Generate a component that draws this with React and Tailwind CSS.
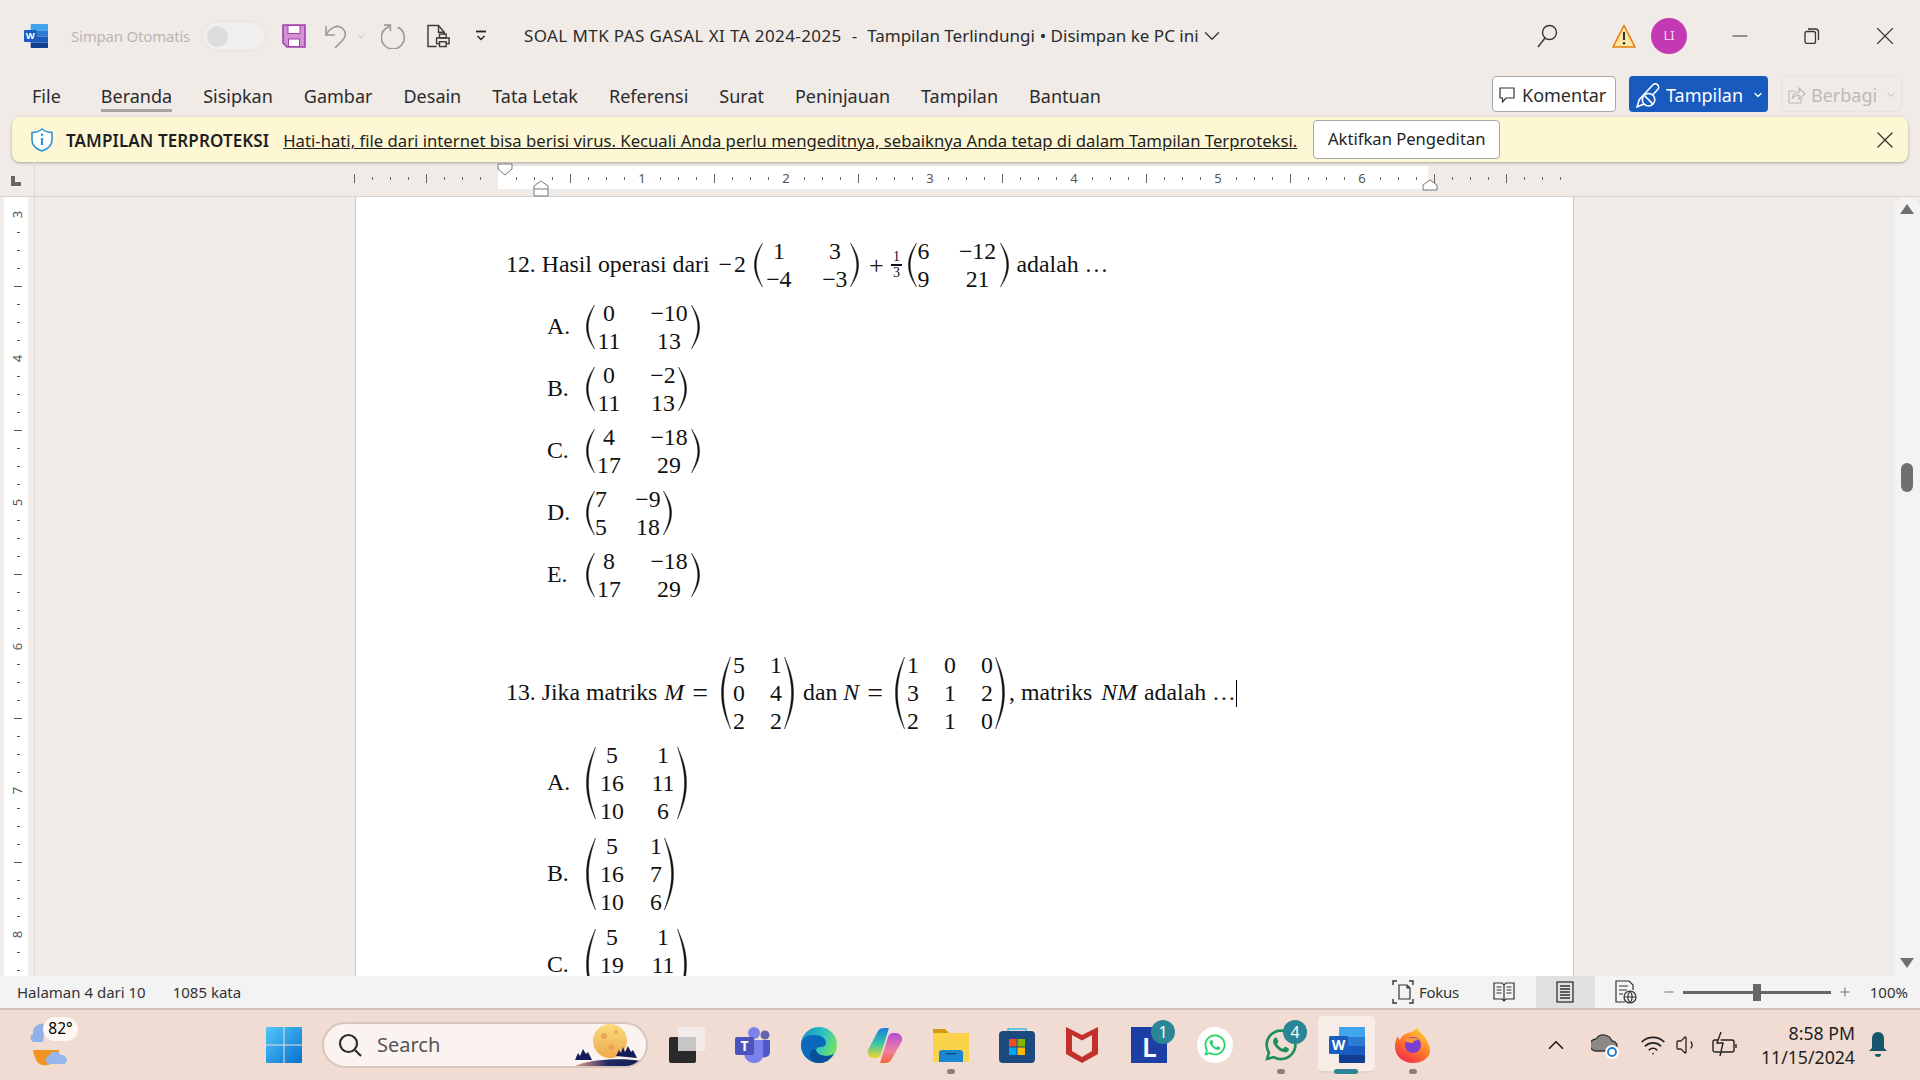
import { FaWhatsapp } from 'react-icons/fa';
import { ChevronDown, ChevronUp, Minus, Plus, X, Wifi, Volume1 } from 'lucide-react';

const tabs = ['Beranda', 'Sisipkan', 'Gambar', 'Desain', 'Tata Letak', 'Referensi', 'Surat', 'Peninjauan', 'Tampilan', 'Bantuan'];

const hTicks = Array.from({ length: 68 }, (_, i) => i - 8);
const vTicks = Array.from({ length: 43 }, (_, i) => i);

function WordIcon({ className }) {
  return (
    <svg viewBox="0 0 36 36" className={className}>
      <path d="M10 1a1 1 0 0 1 1-1h24a1 1 0 0 1 1 1v9H10z" fill="#41a5ee" />
      <rect x="10" y="10" width="26" height="9" fill="#2b7cd3" />
      <rect x="10" y="19" width="26" height="9" fill="#185abd" />
      <path d="M10 28h26v7a1 1 0 0 1-1 1H11a1 1 0 0 1-1-1z" fill="#103f91" />
      <rect x="0" y="9" width="19" height="18" rx="1.5" fill="#1a5cc0" />
      <text x="9.5" y="23" textAnchor="middle" fontSize="14" fontWeight="700" fill="#fff" fontFamily="Noto Sans">W</text>
    </svg>
  );
}

function Paren({ right, className }) {
  return (
    <svg viewBox="0 0 10 60" preserveAspectRatio="none" className={className}>
      <path
        d={right
          ? 'M0.5 0C7 12 9.5 20 9.5 30S7 48 0.5 60C5 48 7.5 40 7.5 30S5 12 0.5 0z'
          : 'M9.5 0C3 12 0.5 20 0.5 30S3 48 9.5 60C5 48 2.5 40 2.5 30S5 12 9.5 0z'}
        fill="#111"
        stroke="#111"
        strokeWidth="0.4"
        vectorEffect="non-scaling-stroke"
      />
    </svg>
  );
}

function Matrix({ cells, gridClass, parenClass }) {
  return (
    <div className="flex items-center">
      <Paren className={parenClass} />
      <div className={`grid text-center leading-[28px] ${gridClass}`}>
        {cells.map((c, i) => (
          <span key={i} className="whitespace-nowrap">{c}</span>
        ))}
      </div>
      <Paren right className={parenClass} />
    </div>
  );
}

function Option2({ label, cells, gridClass }) {
  return (
    <div className="flex items-center h-[62px]">
      <span className="w-[39px]">{label}</span>
      <Matrix cells={cells} gridClass={gridClass} parenClass="w-[9px] h-[44px]" />
    </div>
  );
}

function Option3({ label, cells, gridClass }) {
  return (
    <div className="flex items-center h-[91px] shrink-0">
      <span className="w-[39px]">{label}</span>
      <Matrix cells={cells} gridClass={gridClass} parenClass="w-[10px] h-[72px]" />
    </div>
  );
}

function TitleBar() {
  return (
    <div className="h-[72px] flex items-center pl-[24px] pr-[20px]">
      <WordIcon className="w-[24px] h-[24px]" />
      <span className="ml-[23px] w-[121px] text-[15px] text-[#b9b6b3] whitespace-nowrap tracking-[-0.2px]">Simpan Otomatis</span>
      <div className="ml-[10px] w-[64px] h-[30px] rounded-full bg-[#f1efed] border border-[#e6e3e0] flex items-center pl-[4px]">
        <div className="w-[21px] h-[21px] rounded-full bg-[#dfdddb]" />
      </div>
      <svg viewBox="0 0 24 24" className="ml-[16px] w-[24px] h-[24px]">
        <path d="M1 1h22v22H5l-4-4z" fill="#d492d6" stroke="#a43fae" strokeWidth="1.6" />
        <rect x="6" y="1.5" width="12" height="8" fill="#fff" stroke="#a43fae" strokeWidth="1" />
        <rect x="6.5" y="15" width="11" height="7.5" fill="#fff" stroke="#a43fae" strokeWidth="1" />
      </svg>
      <svg viewBox="0 0 24 24" className="ml-[18px] w-[24px] h-[24px]" fill="none" stroke="#9b9997" strokeWidth="1.6">
        <path d="M2 2v9h9" />
        <path d="M2 11C6 4 13 0 18 4c5 4 4 9 0 13l-7 7" />
      </svg>
      <ChevronDown className="ml-[7px] w-[11px] h-[11px] text-[#b5b3b1]" strokeWidth={2} />
      <svg viewBox="0 0 24 24" className="ml-[15px] w-[25px] h-[25px]" fill="none" stroke="#9b9997" strokeWidth="1.6">
        <path d="M8 2.5A11 11 0 1 0 16 3" />
        <path d="M3 1h6v6" />
      </svg>
      <svg viewBox="0 0 24 24" className="ml-[21px] w-[23px] h-[24px]" fill="none" stroke="#3b3b3b" strokeWidth="1.5">
        <path d="M10 23H1V1h11l6 7v3" />
        <path d="M12 1v7h6" />
        <rect x="10" y="14" width="13" height="6" fill="#f1ebe7" />
        <rect x="13" y="10" width="7" height="4" />
        <rect x="13" y="18" width="7" height="5" fill="#f1ebe7" />
      </svg>
      <svg viewBox="0 0 12 12" className="ml-[25px] w-[12px] h-[12px]" fill="none" stroke="#222" strokeWidth="1.4">
        <path d="M1 1.5h10" strokeWidth="1.8" />
        <path d="M2.5 6L6 9.5 9.5 6" />
      </svg>
      <div className="ml-[37px] text-[17px] text-[#2b2b2b] whitespace-nowrap flex items-center">
        <span className="tracking-[0.4px]">SOAL MTK PAS GASAL XI TA 2024-2025</span>
        <span className="mx-[10px]">-</span>
        <span>Tampilan Terlindungi</span>
        <span className="ml-[5px]">• Disimpan ke PC ini</span>
      </div>
      <ChevronDown className="w-[26px] h-[26px] text-[#333]" strokeWidth={1.1} />
      <div className="ml-auto flex items-center">
        <svg viewBox="0 0 22 24" className="w-[22px] h-[24px]" fill="none" stroke="#333" strokeWidth="1.4">
          <circle cx="13.5" cy="8.5" r="7" />
          <path d="M9 14L2 23" />
        </svg>
        <svg viewBox="0 0 24 24" className="ml-[54px] w-[24px] h-[24px]">
          <path d="M12 1.5L23 23H1z" fill="#fbe6a6" stroke="#e87d0d" strokeWidth="1.6" strokeLinejoin="round" />
          <path d="M12 8v8" stroke="#333" strokeWidth="2" />
          <circle cx="12" cy="19.2" r="1.2" fill="#333" />
        </svg>
        <div className="ml-[15px] w-[36px] h-[36px] rounded-full bg-[#c239b3] text-[#f6d8f2] text-[13px] flex items-center justify-center">LI</div>
        <Minus className="ml-[41px] w-[24px] h-[24px] text-[#333]" strokeWidth={1} />
        <svg viewBox="0 0 16 16" className="ml-[52px] w-[16px] h-[16px]" fill="none" stroke="#333" strokeWidth="1.3">
          <rect x="1" y="3.5" width="10.5" height="12" rx="2" />
          <path d="M4 1h7.5a3 3 0 0 1 3 3v8" />
        </svg>
        <X className="ml-[50px] w-[30px] h-[30px] text-[#333]" strokeWidth={0.9} />
      </div>
    </div>
  );
}

function TabRow() {
  return (
    <div className="h-[45px] flex items-start pl-[32px] pr-[18px] pt-[4px] text-[18px] text-[#2b2b2b]">
      <span className="leading-[40px]">File</span>
      <div className="ml-[40px] flex gap-[31px]">
        {tabs.map(t => (
          <span key={t} className={`leading-[40px] h-[36px] ${t === 'Beranda' ? 'border-b-[3px] border-[#a8a6a4]' : ''}`}>{t}</span>
        ))}
      </div>
      <div className="ml-auto flex items-center gap-[13px] text-[18px]">
        <div className="w-[124px] h-[36px] bg-white border border-[#a9a7a5] rounded-[4px] flex items-center pl-[6px] pt-[2px] gap-[7px]">
          <svg viewBox="0 0 16 16" className="w-[16px] h-[16px]" fill="none" stroke="#333" strokeWidth="1.2">
            <path d="M1 1h14v10H7l-3.5 4V11H1z" />
          </svg>
          Komentar
        </div>
        <div className="w-[139px] h-[36px] bg-[#185abd] text-white rounded-[4px] flex items-center pl-[6px] pt-[2px] gap-[6px]">
          <svg viewBox="0 0 24 24" className="w-[25px] h-[25px]" fill="none" stroke="#fff" strokeWidth="1.5">
            <path d="M2 23l2-7L17 2a3 3 0 0 1 5 4L9 20z" />
            <circle cx="13" cy="16" r="6" fill="#185abd" />
            <path d="M9 12l8 8" />
          </svg>
          Tampilan
          <ChevronDown className="ml-[3px] w-[12px] h-[12px]" strokeWidth={2.5} />
        </div>
        <div className="w-[121px] h-[36px] bg-[#efebe8] border border-[#e6e2df] text-[#bcbab8] rounded-[4px] flex items-center pl-[6px] pt-[2px] gap-[5px]">
          <svg viewBox="0 0 18 18" className="w-[18px] h-[18px]" fill="none" stroke="#bcbab8" strokeWidth="1.2">
            <path d="M7 5H1v12h12v-5" />
            <path d="M4 13C5 8 8 6 11 6V2l6 6-6 5V9C8 9 6 10 4 13z" />
          </svg>
          Berbagi
          <ChevronDown className="ml-[3px] w-[12px] h-[12px]" strokeWidth={2} />
        </div>
      </div>
    </div>
  );
}

function Banner() {
  return (
    <div className="mx-[12px] h-[45px] rounded-[8px] bg-[#fdf7d3] shadow-[0_1px_3px_rgba(0,0,0,0.3)] flex items-center pl-[19px] pr-[9px] text-[#1f1f1f]">
      <svg viewBox="0 0 22 24" className="w-[22px] h-[24px]" fill="none" stroke="#2f93d4" strokeWidth="1.6">
        <path d="M11 1c3 2.5 6 3.5 10 3.5V12c0 5-4 9-10 11C5 21 1 17 1 12V4.5C5 4.5 8 3.5 11 1z" fill="#fff" />
        <path d="M11 10v7" strokeWidth="2.2" />
        <circle cx="11" cy="6.8" r="1.2" fill="#2f93d4" stroke="none" />
      </svg>
      <span className="ml-[13px] pt-[2px] text-[17px] font-semibold whitespace-nowrap tracking-[0.1px]">TAMPILAN TERPROTEKSI</span>
      <span className="ml-[14px] pt-[2px] text-[16.7px] underline whitespace-nowrap">Hati-hati, file dari internet bisa berisi virus. Kecuali Anda perlu mengeditnya, sebaiknya Anda tetap di dalam Tampilan Terproteksi.</span>
      <div className="ml-[16px] w-[187px] h-[39px] bg-white border border-[#a9a7a5] rounded-[4px] flex items-center justify-center text-[16.6px] whitespace-nowrap">Aktifkan Pengeditan</div>
      <X className="ml-auto w-[28px] h-[28px] text-[#333]" strokeWidth={1.1} />
    </div>
  );
}

function Ruler() {
  return (
    <div className="relative h-[35px] border-b border-[#d6d4d2]">
      <div className="mt-[4px] ml-[498px] w-[930px] h-[23px] bg-white" />
      <div className="absolute left-[34px] top-0 bottom-0 w-px bg-[#dcdad8]" />
      <div className="absolute left-[11px] top-[14px] w-[10px] h-[10px] border-l-[4px] border-b-[4px] border-[#666]" />
      <div className="absolute left-0 top-[5px] h-[23px] pl-[345px] flex items-center">
        {hTicks.map(n => (
          <div key={n} className="w-[18px] flex justify-center items-center">
            {n % 8 === 0 && n >= 8 && n <= 48 ? (
              <span className="text-[13px] leading-none text-[#555]">{n / 8}</span>
            ) : n === 0 ? null : n % 4 === 0 ? (
              <div className="w-px h-[9px] bg-[#666]" />
            ) : (
              <div className="w-px h-[3px] bg-[#666]" />
            )}
          </div>
        ))}
      </div>
      <svg viewBox="0 0 16 13" className="absolute left-[497px] top-[1px] w-[16px] h-[13px]">
        <path d="M1 1h14v5l-7 6-7-6z" fill="#fff" stroke="#777" />
      </svg>
      <svg viewBox="0 0 16 17" className="absolute left-[533px] top-[18px] w-[16px] h-[17px]">
        <path d="M1 16V6l7-5 7 5v10zM1 9h14" fill="#fff" stroke="#777" />
      </svg>
      <svg viewBox="0 0 16 12" className="absolute left-[1422px] top-[17px] w-[16px] h-[12px]">
        <path d="M1 11V6l7-5 7 5v5z" fill="#fff" stroke="#777" />
      </svg>
    </div>
  );
}

function VRuler() {
  return (
    <div className="w-[35px] h-full border-r border-[#dcdad8] pl-[4px] shrink-0 overflow-hidden">
      <div className="w-[24px] h-full bg-white pt-[8px] pl-[4px]">
        {vTicks.map(i => (
          <div key={i} className="h-[18px] flex items-center justify-center">
            {i % 8 === 0 ? (
              <span className="text-[13px] leading-none text-[#555] -rotate-90">{i / 8 + 3}</span>
            ) : i % 4 === 0 ? (
              <div className="w-[8px] h-px bg-[#555]" />
            ) : (
              <div className="w-[3px] h-px bg-[#555]" />
            )}
          </div>
        ))}
      </div>
    </div>
  );
}

function Page() {
  return (
    <div className="w-[1219px] h-full shrink-0 bg-white border-x border-[#c9c7c5] pl-[150px] pt-[37px] overflow-hidden font-['Liberation_Serif',serif] text-[23.8px] text-[#111]">
      <div className="flex items-center h-[62px] whitespace-nowrap">
        <span>12. Hasil operasi dari</span>
        <span className="ml-[9px] tracking-[2px]">−2</span>
        <div className="ml-[6px]">
          <Matrix cells={['1', '3', '−4', '−3']} gridClass="grid-cols-[32px_30px] gap-x-[25px]" parenClass="w-[9px] h-[44px]" />
        </div>
        <span className="ml-[10px] mr-[7px] text-[26px]">+</span>
        <div className="flex flex-col items-center w-[12px] text-[14px] leading-[14px]">
          <span>1</span>
          <div className="w-[11px] h-[2px] bg-[#111]" />
          <span>3</span>
        </div>
        <div className="ml-[5px]">
          <Matrix cells={['6', '−12', '9', '21']} gridClass="grid-cols-[14px_44px] gap-x-[25px]" parenClass="w-[9px] h-[44px]" />
        </div>
        <span className="ml-[8px]">adalah …</span>
      </div>
      <div className="pl-[41px]">
        <Option2 label="A." cells={['0', '−10', '11', '13']} gridClass="grid-cols-[28px_44px] gap-x-[24px]" />
        <Option2 label="B." cells={['0', '−2', '11', '13']} gridClass="grid-cols-[28px_30px] gap-x-[25px]" />
        <Option2 label="C." cells={['4', '−18', '17', '29']} gridClass="grid-cols-[28px_44px] gap-x-[24px]" />
        <Option2 label="D." cells={['7', '−9', '5', '18']} gridClass="grid-cols-[12px_30px] gap-x-[26px]" />
        <Option2 label="E." cells={['8', '−18', '17', '29']} gridClass="grid-cols-[28px_44px] gap-x-[24px]" />
      </div>
      <div className="mt-[45px] flex items-center h-[84px] whitespace-nowrap">
        <span>13. Jika matriks</span>
        <i className="ml-[7px]">M</i>
        <span className="ml-[8px] text-[28px] leading-none">=</span>
        <div className="ml-[13px]">
          <Matrix cells={['5', '1', '0', '4', '2', '2']} gridClass="grid-cols-[16px_16px] gap-x-[21px]" parenClass="w-[10px] h-[72px]" />
        </div>
        <span className="ml-[9px]">dan</span>
        <i className="ml-[6px]">N</i>
        <span className="ml-[8px] text-[28px] leading-none">=</span>
        <div className="ml-[12px]">
          <Matrix cells={['1', '0', '0', '3', '1', '2', '2', '1', '0']} gridClass="grid-cols-[16px_16px_16px] gap-x-[21px]" parenClass="w-[10px] h-[72px]" />
        </div>
        <span className="ml-[4px]">, matriks</span>
        <i className="ml-[9px]">NM</i>
        <span className="ml-[7px]">adalah …</span>
        <div className="w-px h-[27px] bg-black" />
      </div>
      <div className="pl-[41px] mt-[2px]">
        <Option3 label="A." cells={['5', '1', '16', '11', '10', '6']} gridClass="grid-cols-[32px_28px] gap-x-[21px]" />
        <Option3 label="B." cells={['5', '1', '16', '7', '10', '6']} gridClass="grid-cols-[32px_16px] gap-x-[20px]" />
        <Option3 label="C." cells={['5', '1', '19', '11', '10', '6']} gridClass="grid-cols-[32px_28px] gap-x-[21px]" />
      </div>
    </div>
  );
}

function ScrollBar() {
  return (
    <div className="w-[26px] h-full shrink-0 bg-[#f3f3f3] rounded-t-[12px] flex flex-col items-center pt-[7px] pb-[8px]">
      <svg viewBox="0 0 14 10" className="w-[14px] h-[10px]"><path d="M7 0l7 10H0z" fill="#707070" /></svg>
      <div className="mt-[249px] w-[12px] h-[29px] rounded-full bg-[#707070]" />
      <svg viewBox="0 0 14 10" className="mt-auto w-[14px] h-[10px]"><path d="M7 10l7-10H0z" fill="#707070" /></svg>
    </div>
  );
}

function StatusBar() {
  return (
    <div className="h-[32px] bg-[#f3f3f3] flex items-center pl-[17px] pr-[12px] text-[15px] text-[#333]">
      <span>Halaman 4 dari 10</span>
      <span className="ml-[27px]">1085 kata</span>
      <div className="ml-auto flex items-center h-full">
        <svg viewBox="0 0 22 24" className="w-[22px] h-[24px]" fill="none" stroke="#333" strokeWidth="1.2">
          <path d="M7 5h8l3 3v11H7zM15 5v3h3" />
          <path d="M1 5V1h4M17 1h4v4M1 19v4h4M21 19v4h-4" strokeWidth="1.4" />
        </svg>
        <span className="ml-[5px] tracking-[-0.3px]">Fokus</span>
        <svg viewBox="0 0 22 20" className="ml-[34px] w-[22px] h-[20px]" fill="none" stroke="#333" strokeWidth="1.2">
          <path d="M1 1h8l2 2 2-2h8v16h-8l-2 2-2-2H1zM11 3v15M3.5 5h5M3.5 8h5M3.5 11h5M13.5 5h5M13.5 8h5M13.5 11h5" />
        </svg>
        <div className="ml-[21px] w-[59px] h-full bg-[#e0e0e0] flex items-center justify-center">
          <svg viewBox="0 0 18 22" className="w-[18px] h-[22px]" fill="none" stroke="#333" strokeWidth="1.3">
            <rect x="1" y="1" width="16" height="20" />
            <path d="M4 5h10M4 8h10M4 11h10M4 14h10M4 17h10" strokeWidth="1.6" />
          </svg>
        </div>
        <svg viewBox="0 0 22 24" className="ml-[20px] w-[22px] h-[24px]" fill="none" stroke="#333" strokeWidth="1.2">
          <path d="M10 22H1V1h13l4 4v5M4 6h9M4 10h8M4 14h4" />
          <circle cx="15" cy="17" r="6" fill="#f3f3f3" />
          <path d="M9 17h12M15 11c-3 4-3 8 0 12M15 11c3 4 3 8 0 12" />
        </svg>
        <Minus className="ml-[25px] w-[14px] h-[14px] text-[#555]" strokeWidth={1.4} />
        <div className="ml-[7px] relative w-[148px] h-[3px] bg-[#666]">
          <div className="absolute left-[70px] -top-[7px] w-[8px] h-[17px] bg-[#666]" />
        </div>
        <Plus className="ml-[7px] w-[14px] h-[14px] text-[#555]" strokeWidth={1.4} />
        <span className="ml-[18px]">100%</span>
      </div>
    </div>
  );
}

function Weather() {
  return (
    <div className="relative w-[46px] h-[46px] ml-[28px]">
      <svg viewBox="0 0 46 46" className="w-[46px] h-[46px]">
        <path d="M5 8a10 10 0 0 1 12-6l-2 18h-8c-5 0-6-7-2-8z" fill="#8fb2ea" />
        <path d="M5 28h26c0 10-8 17-17 15C9 42 6 35 5 28z" fill="#f29423" />
        <path d="M22 42c-5 0-6-7-1-8 1-5 9-6 12-1 6-1 9 9 1 9z" fill="#96b7ee" />
      </svg>
      <div className="absolute left-[15px] -top-[5px] w-[35px] h-[24px] rounded-full bg-[#fdf8f4] text-[15.5px] text-black flex items-center justify-center">82°</div>
    </div>
  );
}

function SearchBox() {
  return (
    <div className="ml-[20px] w-[326px] h-[46px] rounded-full bg-[#faf3ef] border-2 border-[#d9c5bc] flex items-center pl-[14px] relative overflow-hidden">
      <svg viewBox="0 0 24 24" className="w-[24px] h-[24px]" fill="none" stroke="#2b2b2b" strokeWidth="2.2">
        <circle cx="10.5" cy="10.5" r="8.5" />
        <path d="M17 17l6 6" />
      </svg>
      <span className="ml-[15px] text-[20px] text-[#555]">Search</span>
      <svg viewBox="0 0 68 44" className="absolute right-[4px] top-0 w-[68px] h-[44px]">
        <defs>
          <linearGradient id="moonFill" x1="0" y1="0" x2="0" y2="1">
            <stop offset="0" stopColor="#fadb80" />
            <stop offset="1" stopColor="#f0a94b" />
          </linearGradient>
          <linearGradient id="hill" x1="0" y1="0" x2="1" y2="0">
            <stop offset="0" stopColor="#eaa28f" />
            <stop offset="0.5" stopColor="#1f2a63" />
            <stop offset="1" stopColor="#131b55" />
          </linearGradient>
        </defs>
        <circle cx="36" cy="17" r="17" fill="url(#moonFill)" />
        <circle cx="30" cy="12" r="3" fill="#e8a94e" />
        <circle cx="42" cy="8" r="2" fill="#e8a94e" />
        <circle cx="37" cy="23" r="2.5" fill="#ed9c5a" />
        <path d="M1 36l3-7 2 3 3-7 3 5 2-2 4 8zM42 32l3-6 2 3 2-6 2 5 3-6 3 6 2-2 4 8z" fill="#121c58" />
        <path d="M1 42c12-6 45-9 66-5-3 5-16 6-24 6H8c-3 0-6-1-7-1z" fill="url(#hill)" />
      </svg>
    </div>
  );
}

function TaskIcons() {
  return (
    <div className="ml-[21px] flex items-center gap-[30px]">
      <svg viewBox="0 0 36 36" className="w-[36px] h-[36px]">
        <rect x="0" y="10" width="27" height="26" rx="2" fill="#2a2a2a" />
        <rect x="9" y="0" width="27" height="24" rx="1" fill="#f4efed" fillOpacity="0.85" />
        <rect x="9" y="10" width="18" height="14" fill="#c8c6c4" />
      </svg>
      <svg viewBox="0 0 36 36" className="w-[36px] h-[36px]">
        <circle cx="30" cy="8" r="4.5" fill="#6264a7" />
        <circle cx="19" cy="6" r="6" fill="#7b83eb" />
        <path d="M25 13h10v12a6 6 0 0 1-10 4z" fill="#5059c9" />
        <path d="M9 13h19v16a8 8 0 0 1-8 7 10 10 0 0 1-11-9z" fill="#7b83eb" />
        <rect x="0" y="10" width="19" height="18" rx="2" fill="#4b53bc" />
        <text x="9.5" y="24" textAnchor="middle" fontSize="14" fontWeight="700" fill="#fff" fontFamily="Noto Sans">T</text>
      </svg>
      <svg viewBox="0 0 36 36" className="w-[36px] h-[36px]">
        <defs>
          <linearGradient id="edgeTop" x1="0" y1="0" x2="1" y2="0.4">
            <stop offset="0" stopColor="#0c8fc9" />
            <stop offset="0.6" stopColor="#2fc3bf" />
            <stop offset="1" stopColor="#6fe06c" />
          </linearGradient>
        </defs>
        <circle cx="18" cy="18" r="18" fill="url(#edgeTop)" />
        <path d="M0 18C0 9 8 8 14 8c6 0 11 3 11 8 0 3-3 4-6 4-2 0-4 1-4 3 0 3 5 6 10 6 3 0 6-1 7-2-3 6-8 9-14 9C8 36 0 28 0 18z" fill="#0a69bb" />
        <path d="M15 23c0 3 5 6 10 6 3 0 6-1 7-2 1 0 0 1 0 1-3 5-8 8-14 8-6 0-10-4-9-9 1-3 3-6 6-4z" fill="#094e9c" />
      </svg>
      <svg viewBox="0 0 36 36" className="w-[36px] h-[36px]">
        <defs>
          <linearGradient id="copA" x1="0" y1="0" x2="0" y2="1">
            <stop offset="0" stopColor="#1b7fe0" />
            <stop offset="0.5" stopColor="#33c4a8" />
            <stop offset="1" stopColor="#f0d72f" />
          </linearGradient>
          <linearGradient id="copB" x1="0" y1="0" x2="0" y2="1">
            <stop offset="0" stopColor="#b34fd8" />
            <stop offset="0.6" stopColor="#f07ea0" />
            <stop offset="1" stopColor="#f3693a" />
          </linearGradient>
        </defs>
        <path d="M11 4c1-2 3-3 6-3h5l-8 26c-1 2-2 4-5 4H6C2 31 0 27 1 23z" fill="url(#copA)" />
        <path d="M24 33c-1 2-3 3-6 3h-5l8-26c1-2 2-4 5-4h3c4 0 7 4 6 8z" fill="url(#copB)" />
      </svg>
      <div className="relative">
        <svg viewBox="0 0 36 36" className="w-[36px] h-[36px]">
          <path d="M0 2h12l4 4h20v4H0z" fill="#d39b0e" />
          <rect x="0" y="6" width="36" height="29" rx="1" fill="#fbd24b" />
          <path d="M6 35v-9a3 3 0 0 1 3-3h18a3 3 0 0 1 3 3v9z" fill="#1a86d0" />
          <rect x="13" y="26" width="10" height="1.5" fill="#0d4d86" />
        </svg>
        <div className="absolute left-[14px] -bottom-[11px] w-[8px] h-[5px] rounded-full bg-[#8a7f7a]" />
      </div>
      <svg viewBox="0 0 36 36" className="w-[36px] h-[36px]">
        <path d="M9 6V2h18v4" fill="none" stroke="#3fb8e8" strokeWidth="1.5" />
        <rect x="0" y="4" width="36" height="32" rx="4" fill="#1c4a80" />
        <rect x="10" y="12" width="7.5" height="7.5" fill="#f25022" />
        <rect x="18.5" y="12" width="7.5" height="7.5" fill="#7fba00" />
        <rect x="10" y="20.5" width="7.5" height="7.5" fill="#00a4ef" />
        <rect x="18.5" y="20.5" width="7.5" height="7.5" fill="#ffb900" />
      </svg>
      <div className="w-[36px] flex">
        <svg viewBox="0 0 32 36" className="ml-[1px] w-[32px] h-[36px]">
          <path d="M0 0l16 8 16-8v27L16 36 0 27zM6 8v16l10 6 10-6V8l-10 5.5z" fill="#c1302b" fillRule="evenodd" />
        </svg>
      </div>
      <div className="relative w-[36px] h-[36px] bg-[#1d3fa5]">
        <span className="absolute left-[11px] top-[6px] text-[27px] leading-none font-semibold text-white">L</span>
        <div className="absolute -right-[8px] -top-[7px] w-[24px] h-[24px] rounded-full bg-[#2a8595] text-white text-[16px] flex items-center justify-center">1</div>
      </div>
      <div className="w-[36px] h-[36px] rounded-full bg-white flex items-center justify-center">
        <FaWhatsapp className="w-[24px] h-[24px] text-[#25d366]" />
      </div>
      <div className="relative w-[36px] h-[36px]">
        <FaWhatsapp className="w-[36px] h-[36px] text-[#1f8f5a]" />
        <div className="absolute -right-[8px] -top-[7px] w-[24px] h-[24px] rounded-full bg-[#2a8595] text-white text-[16px] flex items-center justify-center">4</div>
        <div className="absolute left-[14px] -bottom-[11px] w-[8px] h-[5px] rounded-full bg-[#8a7f7a]" />
      </div>
      <div className="relative w-[36px] h-[36px]">
        <div className="absolute -left-[11px] -top-[11px] w-[57px] h-[57px] rounded-[5px] bg-[#f8ece7] border-b-2 border-[#e3d3cb]" />
        <WordIcon className="relative w-[36px] h-[36px]" />
        <div className="absolute left-[5px] -bottom-[11px] w-[24px] h-[5px] rounded-full bg-[#2a8595]" />
      </div>
      <div className="relative w-[36px] h-[36px]">
        <svg viewBox="0 0 36 36" className="w-[36px] h-[36px]">
          <defs>
            <linearGradient id="foxA" x1="0.8" y1="0" x2="0.2" y2="1">
              <stop offset="0" stopColor="#ffd93b" />
              <stop offset="0.5" stopColor="#ff7a2a" />
              <stop offset="1" stopColor="#f0284d" />
            </linearGradient>
          </defs>
          <path d="M22 0c1 5 5 5 9 12 4 7 5 12 3 16-3 5-9 8-16 8C8 36 0 29 0 20c0-5 1-8 3-11 0 2 1 3 2 4 1-3 4-6 8-7 3-1 7-2 9-6z" fill="url(#foxA)" />
          <circle cx="18" cy="18" r="8" fill="#7b3fd4" />
          <path d="M9 13c4-2 11-3 15 0-4 0-6 1-6 3-4 0-7-1-9-3z" fill="#ff9a2a" />
        </svg>
        <div className="absolute left-[14px] -bottom-[11px] w-[8px] h-[5px] rounded-full bg-[#8a7f7a]" />
      </div>
    </div>
  );
}

function Tray() {
  return (
    <div className="ml-auto pr-[32px] flex items-center">
      <ChevronUp className="w-[26px] h-[26px] text-[#222]" strokeWidth={1.6} />
      <svg viewBox="0 0 28 28" className="ml-[22px] w-[28px] h-[28px]">
        <path d="M5 20a6 6 0 0 1 0-12 9 9 0 0 1 16 2 5 5 0 0 1 0 10z" fill="#8c8987" stroke="#333" strokeWidth="1.3" />
        <circle cx="21" cy="21" r="7" fill="#fff" />
        <circle cx="21" cy="21" r="4" fill="none" stroke="#1e78d0" strokeWidth="1.8" />
      </svg>
      <Wifi className="ml-[21px] w-[26px] h-[26px] text-[#222]" strokeWidth={1.5} />
      <Volume1 className="ml-[9px] w-[24px] h-[24px] text-[#222]" strokeWidth={1.3} />
      <svg viewBox="0 0 26 28" className="ml-[13px] w-[26px] h-[28px]" fill="none" stroke="#222" strokeWidth="1.4">
        <path d="M3 9h17a2 2 0 0 1 2 2v8a2 2 0 0 1-2 2H3a2 2 0 0 1-2-2v-8a2 2 0 0 1 2-2zM24 13v4" />
        <path d="M9 1L5 12h6l-3 13" fill="#f1dcd3" />
      </svg>
      <div className="ml-[23px] w-[94px] flex flex-col items-end text-[17.7px] leading-[24px] text-[#1f1f1f]">
        <span>8:58 PM</span>
        <span>11/15/2024</span>
      </div>
      <svg viewBox="0 0 20 28" className="ml-[13px] w-[20px] h-[28px]">
        <path d="M10 1c4 0 6 3 6 7v9l3 3H1l3-3V8c0-4 2-7 6-7z" fill="#16566a" />
        <path d="M7 23h6a3 3 0 0 1-6 0z" fill="#16566a" />
      </svg>
    </div>
  );
}

function TaskBar() {
  return (
    <div className="h-[72px] bg-[#f1dcd3] border-t-2 border-[#cfc0b9] flex items-center">
      <Weather />
      <svg viewBox="0 0 36 36" className="ml-[192px] w-[36px] h-[36px]">
        <defs>
          <linearGradient id="winFill" x1="0" y1="0" x2="1" y2="1">
            <stop offset="0" stopColor="#52c8fb" />
            <stop offset="1" stopColor="#0670cf" />
          </linearGradient>
        </defs>
        <path d="M1 0h16.5v17.5H0V1a1 1 0 0 1 1-1zM18.5 0H35a1 1 0 0 1 1 1v16.5H18.5zM0 18.5h17.5V36H1a1 1 0 0 1-1-1zM18.5 18.5H36V35a1 1 0 0 1-1 1H18.5z" fill="url(#winFill)" />
      </svg>
      <SearchBox />
      <TaskIcons />
      <Tray />
    </div>
  );
}

export default function App() {
  return (
    <div className="w-[1920px] h-[1080px] overflow-hidden flex flex-col bg-[#f1ebe7] font-['Noto_Sans',sans-serif]">
      <TitleBar />
      <TabRow />
      <Banner />
      <Ruler />
      <div className="h-[779px] flex">
        <VRuler />
        <div className="w-[320px] shrink-0" />
        <Page />
        <div className="flex-1" />
        <ScrollBar />
      </div>
      <StatusBar />
      <TaskBar />
    </div>
  );
}
